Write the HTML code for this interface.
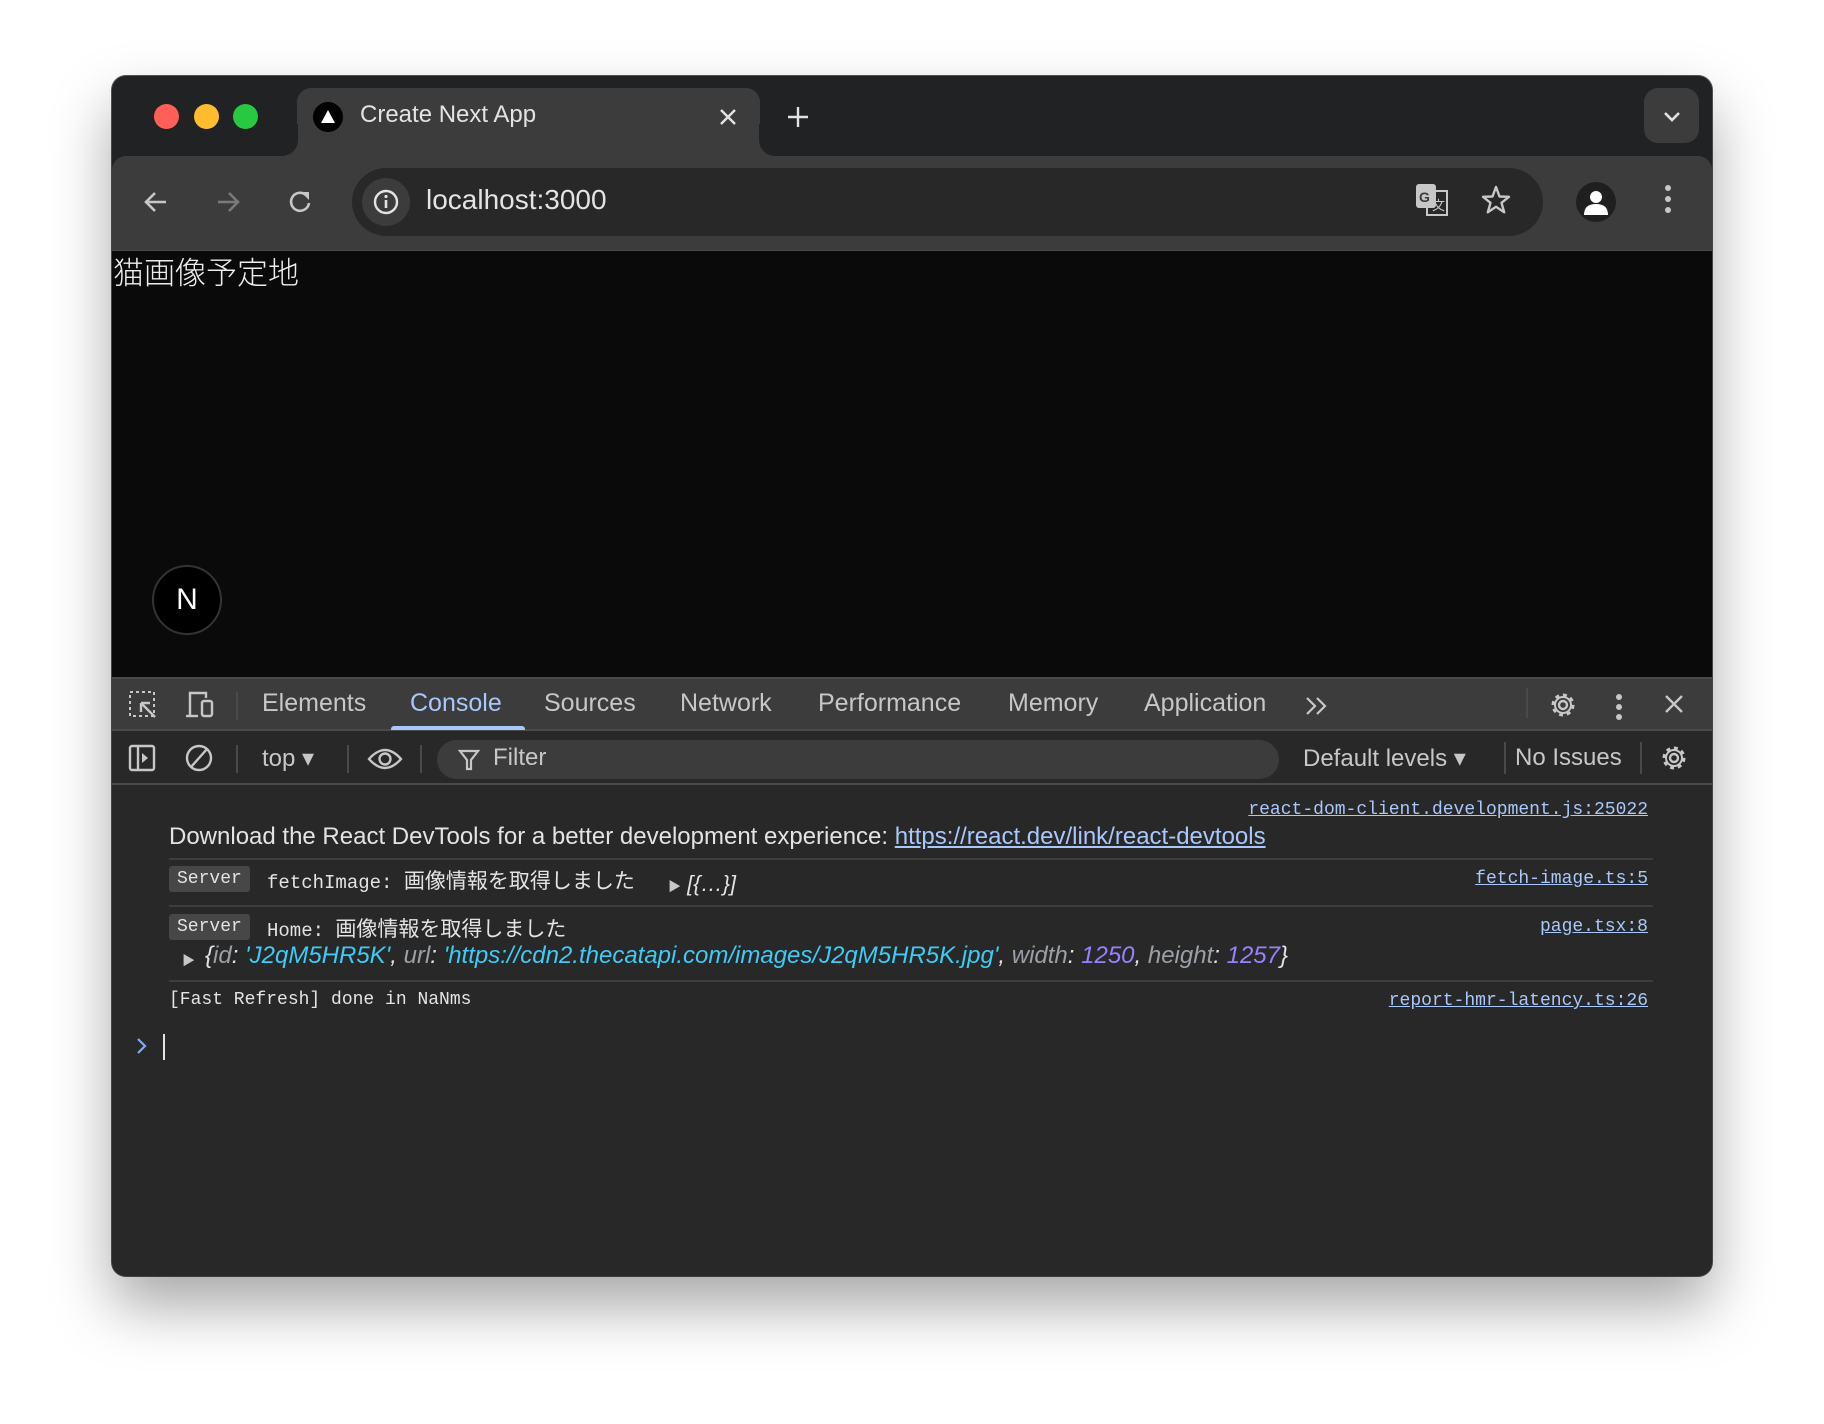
<!DOCTYPE html>
<html><head><meta charset="utf-8"><style>
*{margin:0;padding:0;box-sizing:border-box}
body{width:1824px;height:1424px;background:#fff;position:relative;overflow:hidden;font-family:"Liberation Sans","Noto Sans CJK JP",sans-serif}
.a{position:absolute}
.win{left:112px;top:76px;width:1600px;height:1200px;border-radius:14px;background:#212223;overflow:hidden;box-shadow:0 30px 60px rgba(0,0,0,.35),0 0 0 1px #555}
.mono{font-family:"Liberation Mono","Noto Sans CJK JP",monospace}
.lnk{color:#a8c7fa;text-decoration:underline}
.tab{color:#c7c7c7;font-size:25px;top:692px}
.sep{width:2px;background:#4a4a4a}
.dv{left:57px;width:1484px;height:2px;background:#3d3d3d}
.badge{background:#474747;color:#e3e3e3;border-radius:3px;font-size:18px;padding:1px 8px;height:26px;line-height:24px}
.tb{font-size:24px;color:#c7c7c7}
</style></head><body>
<div class="a win">
 <div class="a" style="left:42px;top:28px;width:25px;height:25px;border-radius:50%;background:#ff5f57"></div>
 <div class="a" style="left:82px;top:28px;width:25px;height:25px;border-radius:50%;background:#febc2e"></div>
 <div class="a" style="left:121px;top:28px;width:25px;height:25px;border-radius:50%;background:#28c840"></div>
 <div class="a" style="left:185px;top:12px;width:463px;height:80px;background:#3c3c3c;border-radius:14px 14px 0 0"></div>
 <div class="a" style="left:170px;top:64px;width:16px;height:16px;background:#3c3c3c"></div>
 <div class="a" style="left:154px;top:48px;width:32px;height:32px;background:#212223;border-radius:0 0 16px 0"></div>
 <div class="a" style="left:647px;top:64px;width:16px;height:16px;background:#3c3c3c"></div>
 <div class="a" style="left:647px;top:48px;width:32px;height:32px;background:#212223;border-radius:0 0 0 16px"></div>
 <div class="a" style="left:201px;top:26px;width:30px;height:30px;border-radius:50%;background:#000"></div>
 <svg class="a" style="left:201px;top:26px" width="30" height="30"><path d="M15 8 L22 21 L8 21Z" fill="#fff"/></svg>
 <div class="a" style="left:248px;top:25px;font-size:24px;color:#e3e3e3">Create Next App</div>
 <svg class="a" style="left:606px;top:31px" width="20" height="20"><path d="M3 3L17 17M17 3L3 17" stroke="#e3e3e3" stroke-width="2.4"/></svg>
 <svg class="a" style="left:675px;top:30px" width="22" height="22"><path d="M11 1V21M1 11H21" stroke="#e3e3e3" stroke-width="2.4"/></svg>
 <div class="a" style="left:1532px;top:12px;width:55px;height:55px;border-radius:14px;background:#3c3c3c"></div>
 <svg class="a" style="left:1550px;top:30px" width="20" height="20"><path d="M3 7L10 14L17 7" stroke="#e3e3e3" stroke-width="2.6" fill="none"/></svg>
 <div class="a" style="left:0;top:80px;width:1600px;height:94px;background:#3c3c3c;border-radius:14px 14px 0 0"></div>
 <svg class="a" style="left:30px;top:112px" width="28" height="28"><path d="M24 14H4M13 5L4 14L13 23" stroke="#c7c7c7" stroke-width="2.6" fill="none"/></svg>
 <svg class="a" style="left:102px;top:112px" width="28" height="28"><path d="M4 14H24M15 5L24 14L15 23" stroke="#7a7a7a" stroke-width="2.6" fill="none"/></svg>
 <svg class="a" style="left:175px;top:112px" width="28" height="28"><path d="M22 15A9 9 0 1 1 19 7" stroke="#c7c7c7" stroke-width="2.6" fill="none"/><path d="M14 4H22V12Z" fill="#c7c7c7"/></svg>
 <div class="a" style="left:240px;top:92px;width:1191px;height:68px;border-radius:34px;background:#282828"></div>
 <div class="a" style="left:250px;top:102px;width:48px;height:48px;border-radius:50%;background:#3c3c3c"></div>
 <svg class="a" style="left:260px;top:112px" width="28" height="28"><circle cx="14" cy="14" r="11" stroke="#e3e3e3" stroke-width="2.4" fill="none"/><path d="M14 12V20" stroke="#e3e3e3" stroke-width="2.6"/><circle cx="14" cy="8.5" r="1.6" fill="#e3e3e3"/></svg>
 <div class="a" style="left:314px;top:108px;font-size:28px;color:#e3e3e3">localhost:3000</div>
 <svg class="a" style="left:1303px;top:107px" width="34" height="34"><rect x="1" y="1" width="20" height="24" rx="3" fill="#c7c7c7"/><rect x="12" y="8" width="20" height="24" fill="none" stroke="#c7c7c7" stroke-width="2"/><text x="4" y="19" font-size="14" font-weight="bold" fill="#3c3c3c" font-family="Liberation Sans">G</text><text x="17" y="27" font-size="13" fill="#c7c7c7" font-family="Noto Sans CJK JP">文</text></svg>
 <svg class="a" style="left:1368px;top:108px" width="32" height="32"><path d="M16 3L19.5 12.5L29 12.8L21.5 18.8L24.2 28.3L16 22.8L7.8 28.3L10.5 18.8L3 12.8L12.5 12.5Z" fill="none" stroke="#c7c7c7" stroke-width="2.4" stroke-linejoin="round"/></svg>
 <div class="a" style="left:1464px;top:106px;width:40px;height:40px;border-radius:50%;background:#1f1f1f"></div>
 <svg class="a" style="left:1464px;top:106px" width="40" height="40"><circle cx="20" cy="15" r="6" fill="#fff"/><path d="M8 33Q8 22 20 22Q32 22 32 33Z" fill="#fff"/></svg>
 <div class="a" style="left:1553px;top:109px;width:6px;height:6px;border-radius:50%;background:#c7c7c7"></div>
 <div class="a" style="left:1553px;top:120px;width:6px;height:6px;border-radius:50%;background:#c7c7c7"></div>
 <div class="a" style="left:1553px;top:131px;width:6px;height:6px;border-radius:50%;background:#c7c7c7"></div>
 <div class="a" style="left:0;top:174px;width:1600px;height:427px;background:#0a0a0a;border-top:1px solid #4a4a4a"></div>
 <div class="a" style="left:1px;top:172px;font-size:31px;color:#ededed;font-family:'Noto Sans CJK JP',sans-serif;font-weight:300">猫画像予定地</div>
 <div class="a" style="left:40px;top:489px;width:70px;height:70px;border-radius:50%;background:#000;border:2px solid #333;color:#fff;font-size:30px;text-align:center;line-height:66px">N</div>
 <div class="a" style="left:0;top:601px;width:1600px;height:54px;background:#3c3c3c;border-top:2px solid #4a4a4a;border-bottom:2px solid #4a4a4a"></div>
 <svg class="a" style="left:16px;top:614px" width="30" height="30"><rect x="2" y="2" width="24" height="24" fill="none" stroke="#c7c7c7" stroke-width="2" stroke-dasharray="3 3"/><path d="M13 13L27 27M13 13V22M13 13H22" stroke="#c7c7c7" stroke-width="2.4" fill="none"/></svg>
 <svg class="a" style="left:72px;top:614px" width="32" height="30"><path d="M6 26V3H22V8" stroke="#c7c7c7" stroke-width="2.4" fill="none"/><path d="M2 26H14" stroke="#c7c7c7" stroke-width="2.4"/><rect x="18" y="11" width="10" height="15" rx="2" stroke="#c7c7c7" stroke-width="2.4" fill="none"/></svg>
 <div class="a sep" style="left:124px;top:616px;height:28px"></div>
 <div class="a tab" style="left:150px;top:613px">Elements</div>
 <div class="a tab" style="left:298px;top:613px;color:#a8c7fa">Console</div>
 <div class="a" style="left:279px;top:650px;width:134px;height:4px;background:#a8c7fa;border-radius:3px 3px 0 0"></div>
 <div class="a tab" style="left:432px;top:613px">Sources</div>
 <div class="a tab" style="left:568px;top:613px">Network</div>
 <div class="a tab" style="left:706px;top:613px">Performance</div>
 <div class="a tab" style="left:896px;top:613px">Memory</div>
 <div class="a tab" style="left:1032px;top:613px">Application</div>
 <svg class="a" style="left:1192px;top:619px" width="26" height="22"><path d="M3 3L11 11L3 19M13 3L21 11L13 19" stroke="#c7c7c7" stroke-width="2.2" fill="none"/></svg>
 <div class="a sep" style="left:1414px;top:612px;height:30px"></div>
 <svg class="a" style="left:1437px;top:615px" width="28" height="28"><circle cx="14" cy="14" r="4" fill="none" stroke="#c7c7c7" stroke-width="2.4"/><circle cx="14" cy="14" r="9.5" fill="none" stroke="#c7c7c7" stroke-width="4" stroke-dasharray="3.7 3.7"/><circle cx="14" cy="14" r="8" fill="none" stroke="#c7c7c7" stroke-width="2"/></svg>
 <div class="a" style="left:1504px;top:618px;width:6px;height:6px;border-radius:50%;background:#c7c7c7"></div>
 <div class="a" style="left:1504px;top:628px;width:6px;height:6px;border-radius:50%;background:#c7c7c7"></div>
 <div class="a" style="left:1504px;top:638px;width:6px;height:6px;border-radius:50%;background:#c7c7c7"></div>
 <svg class="a" style="left:1551px;top:617px" width="22" height="22"><path d="M3 3L19 19M19 3L3 19" stroke="#c7c7c7" stroke-width="2.4"/></svg>
 <div class="a" style="left:0;top:655px;width:1600px;height:545px;background:#282828"></div>
 <div class="a" style="left:0;top:707px;width:1600px;height:2px;background:#4a4a4a"></div>
 <svg class="a" style="left:16px;top:667px" width="30" height="30"><rect x="2" y="3" width="24" height="24" rx="2" fill="none" stroke="#c7c7c7" stroke-width="2.4"/><path d="M10 3V27" stroke="#c7c7c7" stroke-width="2.4"/><path d="M14 10L20 15L14 20Z" fill="#c7c7c7"/></svg>
 <svg class="a" style="left:72px;top:667px" width="30" height="30"><circle cx="15" cy="15" r="12" fill="none" stroke="#c7c7c7" stroke-width="2.4"/><path d="M7 24L23 6" stroke="#c7c7c7" stroke-width="2.4"/></svg>
 <div class="a sep" style="left:124px;top:669px;height:28px"></div>
 <div class="a tb" style="left:150px;top:668px">top ▾</div>
 <div class="a sep" style="left:235px;top:669px;height:28px"></div>
 <svg class="a" style="left:255px;top:670px" width="36" height="26"><path d="M2 13Q18 -5 34 13Q18 31 2 13Z" fill="none" stroke="#c7c7c7" stroke-width="2.4"/><circle cx="18" cy="13" r="5.5" fill="none" stroke="#c7c7c7" stroke-width="2.4"/></svg>
 <div class="a sep" style="left:308px;top:669px;height:28px"></div>
 <div class="a" style="left:325px;top:664px;width:842px;height:39px;border-radius:20px;background:#3c3c3c"></div>
 <svg class="a" style="left:346px;top:672px" width="22" height="24"><path d="M2 3H20L13 12V21H9V12Z" fill="none" stroke="#c7c7c7" stroke-width="2.2"/></svg>
 <div class="a tb" style="left:381px;top:668px">Filter</div>
 <div class="a tb" style="left:1191px;top:668px">Default levels ▾</div>
 <div class="a sep" style="left:1392px;top:666px;height:32px"></div>
 <div class="a tb" style="left:1403px;top:668px">No Issues</div>
 <div class="a sep" style="left:1528px;top:666px;height:32px"></div>
 <svg class="a" style="left:1548px;top:668px" width="28" height="28"><circle cx="14" cy="14" r="4" fill="none" stroke="#c7c7c7" stroke-width="2.4"/><circle cx="14" cy="14" r="9.5" fill="none" stroke="#c7c7c7" stroke-width="4" stroke-dasharray="3.7 3.7"/><circle cx="14" cy="14" r="8" fill="none" stroke="#c7c7c7" stroke-width="2"/></svg>
 <div class="a mono lnk" style="right:64px;top:724px;font-size:18px">react-dom-client.development.js:25022</div>
 <div class="a" style="left:57px;top:747px;font-size:24px;color:#e3e3e3;white-space:nowrap">Download the React DevTools for a better development experience: <span class="lnk">https://react.dev/link/react-devtools</span></div>
 <div class="a dv" style="top:782px"></div>
 <div class="a mono badge" style="left:57px;top:790px">Server</div>
 <div class="a mono" style="left:155px;top:789px;font-size:19px;color:#e3e3e3">fetchImage: <span style="font-size:21px">画像情報を取得しました</span></div>
 <div class="a" style="left:556px;top:795px;font-size:22px;color:#e3e3e3;font-style:italic"><span style="font-size:13px;font-style:normal;color:#c7c7c7">▶</span> [{…}]</div>
 <div class="a mono lnk" style="right:64px;top:793px;font-size:18px">fetch-image.ts:5</div>
 <div class="a dv" style="top:829px"></div>
 <div class="a mono badge" style="left:57px;top:838px">Server</div>
 <div class="a mono" style="left:155px;top:837px;font-size:19px;color:#e3e3e3">Home: <span style="font-size:21px">画像情報を取得しました</span></div>
 <div class="a mono lnk" style="right:64px;top:841px;font-size:18px">page.tsx:8</div>
 <div class="a" style="left:70px;top:874px;font-size:13px;color:#c7c7c7">▶</div>
 <div class="a" style="left:93px;top:866px;font-size:24px;color:#e3e3e3;font-style:italic;white-space:nowrap">{<span style="color:#9aa0a6">id</span>: <span style="color:#3ecbf5">'J2qM5HR5K'</span>, <span style="color:#9aa0a6">url</span>: <span style="color:#3ecbf5">'https://cdn2.thecatapi.com/images/J2qM5HR5K.jpg'</span>, <span style="color:#9aa0a6">width</span>: <span style="color:#9980ff">1250</span>, <span style="color:#9aa0a6">height</span>: <span style="color:#9980ff">1257</span>}</div>
 <div class="a dv" style="top:904px"></div>
 <div class="a mono" style="left:57px;top:914px;font-size:18px;color:#e3e3e3">[Fast Refresh] done in NaNms</div>
 <div class="a mono lnk" style="right:64px;top:915px;font-size:18px">report-hmr-latency.ts:26</div>
 <svg class="a" style="left:23px;top:960px" width="14" height="20"><path d="M3 3L10 10L3 17" stroke="#7cacf8" stroke-width="2.2" fill="none"/></svg>
 <div class="a" style="left:51px;top:958px;width:2px;height:26px;background:#e3e3e3"></div>
</div>
</body></html>
